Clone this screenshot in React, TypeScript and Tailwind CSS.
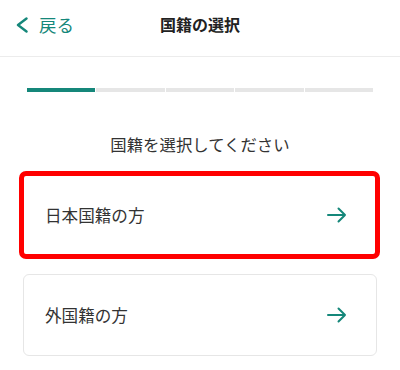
import React from 'react';

const TEAL = '#15877a';

function BackChevron() {
  return (
    <svg width="12" height="16" viewBox="0 0 12 16" fill="none">
      <polyline points="10.5,1.5 2,8 10.5,14.5" stroke={TEAL} strokeWidth="2.4" strokeLinecap="round" strokeLinejoin="round" />
    </svg>
  );
}

function ArrowIcon() {
  return (
    <svg width="20" height="16" viewBox="0 0 20 16" fill="none">
      <path d="M1 8h17M11.5 1.5 18 8l-6.5 6.5" stroke={TEAL} strokeWidth="2" strokeLinecap="round" strokeLinejoin="round" />
    </svg>
  );
}

const steps = [true, false, false, false, false];

export default function App() {
  return (
    <div
      className="w-[400px] h-[370px] bg-white overflow-hidden text-[#222]"
      style={{ fontFamily: '"Noto Sans CJK JP", "Noto Sans", sans-serif' }}
    >
      {/* Header */}
      <div className="relative h-[57px] border-b border-[#ececec] pb-[7px] flex items-center">
        <button className="flex items-center gap-[11px] pl-[16px] text-[17.5px] leading-none" style={{ color: TEAL }}>
          <BackChevron />
          <span>戻る</span>
        </button>
        <div className="absolute left-0 right-0 top-0 bottom-[8px] flex items-center justify-center pointer-events-none">
          <span className="text-[16px] font-bold leading-none">国籍の選択</span>
        </div>
      </div>

      {/* Progress */}
      <div className="mt-[31px] px-[27px] flex gap-[1px]">
        {steps.map((on, i) => (
          <div key={i} className={`flex-1 h-[4px] ${on ? 'bg-[#15877a]' : 'bg-[#e6e6e6]'}`} />
        ))}
      </div>

      <p className="mt-[40px] text-center text-[16.4px] leading-[24px] text-[#333]">国籍を選択してください</p>

      {/* Options */}
      <div className="mt-[15px] ml-[19px] mr-[20px] h-[88px] border-[5px] border-[#ff0000] rounded-[7px] flex items-center justify-between pl-[21px] pr-[28px]">
        <span className="text-[16.6px] leading-none text-[#333]">日本国籍の方</span>
        <ArrowIcon />
      </div>

      <div className="mt-[15px] mx-[23px] h-[82px] border border-[#e6e6e6] rounded-[6px] flex items-center justify-between pl-[21px] pr-[29px]">
        <span className="text-[16.6px] leading-none text-[#333]">外国籍の方</span>
        <ArrowIcon />
      </div>
    </div>
  );
}
